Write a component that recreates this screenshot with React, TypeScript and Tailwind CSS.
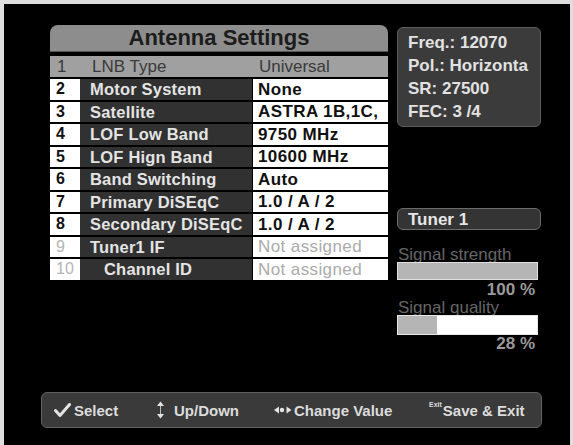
import React from "react";

const rows = [
  { n: "1", label: "LNB Type", value: "Universal", kind: "head" },
  { n: "2", label: "Motor System", value: "None", kind: "on" },
  { n: "3", label: "Satellite", value: "ASTRA 1B,1C,", kind: "on" },
  { n: "4", label: "LOF Low Band", value: "9750 MHz", kind: "on" },
  { n: "5", label: "LOF Hign Band", value: "10600 MHz", kind: "on" },
  { n: "6", label: "Band Switching", value: "Auto", kind: "on" },
  { n: "7", label: "Primary DiSEqC", value: "1.0 / A / 2", kind: "on" },
  { n: "8", label: "Secondary DiSEqC", value: "1.0 / A / 2", kind: "on" },
  { n: "9", label: "Tuner1 IF", value: "Not assigned", kind: "off" },
  { n: "10", label: "Channel ID", value: "Not assigned", kind: "off", indent: true },
];

const info = ["Freq.: 12070", "Pol.: Horizonta", "SR: 27500", "FEC: 3 /4"];

function Check() {
  return (
    <svg width="17" height="14" viewBox="0 0 17 14">
      <path d="M1.5 7.5 L6 12.5 L15.5 1.5" fill="none" stroke="#e4e4e4" strokeWidth="3" strokeLinecap="round" strokeLinejoin="round" />
    </svg>
  );
}

function UpDown() {
  return (
    <svg width="9" height="18" viewBox="0 0 9 18">
      <path d="M4.5 0.5 L8 5 L1 5 Z" fill="#e4e4e4" />
      <path d="M4.5 5 L4.5 13" stroke="#bdbdbd" strokeWidth="1" />
      <path d="M4.5 17.5 L8 13 L1 13 Z" fill="#e4e4e4" />
    </svg>
  );
}

function LeftRight() {
  return (
    <svg width="20" height="8" viewBox="0 0 20 8">
      <path d="M1 4 L6 0.5 L6 7.5 Z" fill="#e4e4e4" />
      <path d="M18.5 4 L13.5 0.5 L13.5 7.5 Z" fill="#e4e4e4" />
      <circle cx="9" cy="4" r="2.2" fill="#e4e4e4" />
    </svg>
  );
}

export default function App() {
  return (
    <div
      className="w-[573px] h-[445px] bg-black border-t-4 border-l-4 border-r-[3px] border-[#dedede] flex flex-col overflow-hidden"
      style={{ fontFamily: '"Liberation Sans", Arial, sans-serif' }}
    >
      <div className="flex items-start gap-[9px] pt-[21px] pl-[46px]">
        {/* Settings table */}
        <div className="w-[338px] flex flex-col">
          <div className="h-[27px] rounded-t-lg bg-[#8d8d8d] border-b border-[#555] flex items-center justify-center text-[22px] font-bold text-[#1c1c1c] leading-none">
            Antenna Settings
          </div>
          <div className="flex flex-col gap-[2px] mt-[4px]">
            {rows.map((r) =>
              r.kind === "head" ? (
                <div key={r.n} className="h-[21px] bg-[#a0a0a0] flex items-center text-[17px] text-[#3a3a3a] leading-none">
                  <span className="w-[30px] pl-[7px]">{r.n}</span>
                  <span className="w-[173px] pl-[12px]">{r.label}</span>
                  <span className="pl-[6px]">{r.value}</span>
                </div>
              ) : (
                <div key={r.n} className="h-[20.5px] flex items-stretch leading-none">
                  <span
                    className={`w-[30px] bg-white flex items-center pl-[6px] text-[16px] ${
                      r.kind === "off" ? "text-[#b4b4b4]" : "text-[#111] font-bold"
                    }`}
                  >
                    {r.n}
                  </span>
                  <span
                    className={`w-[172px] bg-[#313131] flex items-center text-[16.5px] font-bold text-[#e4e4e4] tracking-[0.2px] whitespace-nowrap ${
                      r.indent ? "pl-[24px]" : "pl-[10px]"
                    }`}
                  >
                    {r.label}
                  </span>
                  <span
                    className={`ml-[1px] flex-1 bg-white flex items-center pl-[5px] text-[17px] tracking-[0.4px] whitespace-nowrap overflow-hidden ${
                      r.kind === "off" ? "text-[#aaaaaa]" : "text-[#111] font-bold"
                    }`}
                  >
                    {r.value}
                  </span>
                </div>
              )
            )}
          </div>
        </div>

        {/* Right panel */}
        <div className="w-[144px] mt-[2px] flex flex-col">
          <div className="h-[100px] rounded-md bg-[#3b3b3b] border border-[#5c5c5c] pt-[3px] pl-[10px] overflow-hidden">
            {info.map((t) => (
              <div key={t} className="text-[17px] leading-[23px] font-bold text-[#e2e2e2] whitespace-nowrap">
                {t}
              </div>
            ))}
          </div>
          <div className="mt-[81px] h-[22px] rounded-md bg-[#343434] border border-[#6c6c6c] pl-[10px] flex items-center text-[17px] font-bold text-[#e6e6e6] leading-none">
            Tuner 1
          </div>
          <div className="mt-[15px] text-[17px] leading-[20px] text-[#666] whitespace-nowrap pl-[1px]">Signal strength</div>
          <div className="relative -mt-[3px] w-[141px] h-[18px] bg-[#b5b5b5] border border-[#e0e0e0]" />
          <div className="w-[138px] text-right text-[17px] font-bold leading-[19px] text-[#9a9a9a]">100 %</div>
          <div className="text-[17px] leading-[18px] text-[#666] whitespace-nowrap pl-[1px]">Signal quality</div>
          <div className="relative -mt-[2px] w-[141px] h-[20px] bg-white border border-[#e6e6e6] flex">
            <div className="h-full bg-[#b5b5b5]" style={{ width: "28%" }} />
          </div>
          <div className="w-[138px] text-right text-[17px] font-bold leading-[16px] mt-[1px] text-[#9a9a9a]">28 %</div>
        </div>
      </div>

      {/* Bottom help bar */}
      <div className="mt-auto mb-[17px] ml-[37px] w-[501px] h-[36px] rounded-md bg-[#3a3a3a] border border-[#626262] flex items-center pl-[12px] text-[15px] font-bold text-[#dcdcdc] leading-none whitespace-nowrap">
        <div className="w-[102px] flex items-center gap-[3px]">
          <Check />
          <span>Select</span>
        </div>
        <div className="w-[117px] flex items-center gap-[9px]">
          <UpDown />
          <span>Up/Down</span>
        </div>
        <div className="w-[156px] flex items-center gap-[1px]">
          <LeftRight />
          <span>Change Value</span>
        </div>
        <div className="flex items-start gap-[1px]">
          <span className="text-[7px] mt-[-2px]">Exit</span>
          <span>Save &amp; Exit</span>
        </div>
      </div>
    </div>
  );
}
